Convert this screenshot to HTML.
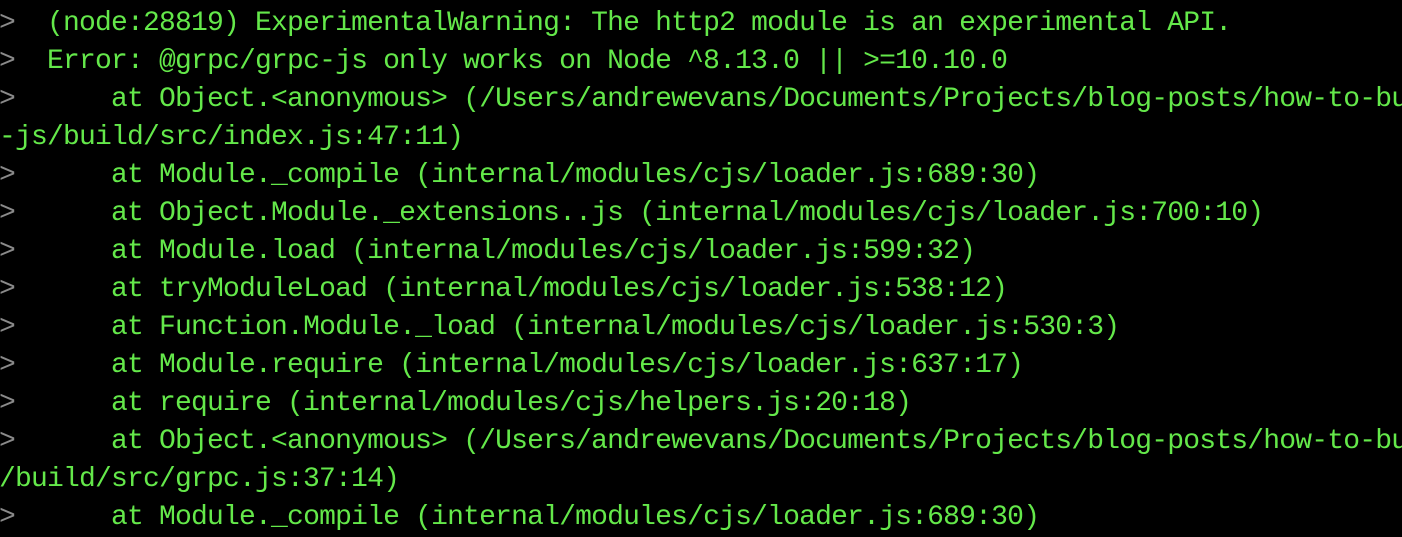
<!DOCTYPE html>
<html><head><meta charset="utf-8"><style>
html,body{margin:0;padding:0;background:#000;width:1402px;height:514px;overflow:hidden}
.t{position:absolute;left:-1px;top:-33px;font-family:"Liberation Mono",monospace;font-size:28px;letter-spacing:-0.8px;line-height:38px;color:#64e84a;white-space:pre}
.p{color:#8a8a8a}
</style></head><body>
<div class="t"><div> </div><div><span class="p">&gt;</span>  (node:28819) ExperimentalWarning: The http2 module is an experimental API.</div><div><span class="p">&gt;</span>  Error: @grpc/grpc-js only works on Node ^8.13.0 || &gt;=10.10.0</div><div><span class="p">&gt;</span>      at Object.&lt;anonymous&gt; (/Users/andrewevans/Documents/Projects/blog-posts/how-to-bu</div><div>-js/build/src/index.js:47:11)</div><div><span class="p">&gt;</span>      at Module._compile (internal/modules/cjs/loader.js:689:30)</div><div><span class="p">&gt;</span>      at Object.Module._extensions..js (internal/modules/cjs/loader.js:700:10)</div><div><span class="p">&gt;</span>      at Module.load (internal/modules/cjs/loader.js:599:32)</div><div><span class="p">&gt;</span>      at tryModuleLoad (internal/modules/cjs/loader.js:538:12)</div><div><span class="p">&gt;</span>      at Function.Module._load (internal/modules/cjs/loader.js:530:3)</div><div><span class="p">&gt;</span>      at Module.require (internal/modules/cjs/loader.js:637:17)</div><div><span class="p">&gt;</span>      at require (internal/modules/cjs/helpers.js:20:18)</div><div><span class="p">&gt;</span>      at Object.&lt;anonymous&gt; (/Users/andrewevans/Documents/Projects/blog-posts/how-to-bu</div><div>/build/src/grpc.js:37:14)</div><div><span class="p">&gt;</span>      at Module._compile (internal/modules/cjs/loader.js:689:30)</div></div>
</body></html>
